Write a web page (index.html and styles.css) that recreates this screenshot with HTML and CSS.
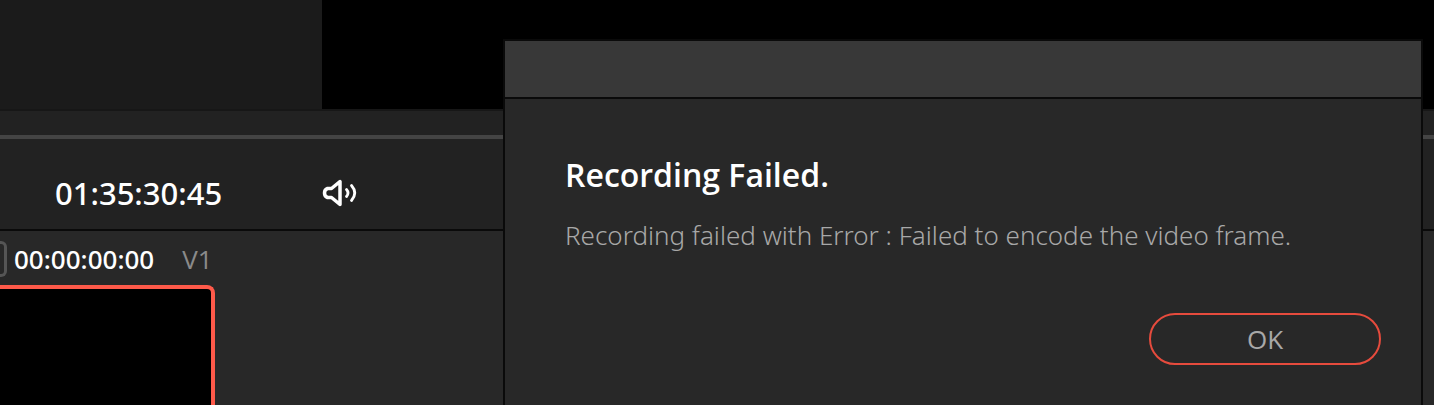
FILE: index.html
```
<!DOCTYPE html>
<html lang="en">
<head>
    <meta charset="UTF-8">
    <meta name="viewport" content="width=device-width, initial-scale=1.0">
    <title>Recording Failed</title>
    <link rel="stylesheet" href="styles.css">
</head>
<body>

<div class="editor">
    <div class="top-area">
        <div class="side-panel"></div>
        <div class="viewer"></div>
    </div>

    <div class="scrub-bar"></div>

    <div class="transport">
        <span class="timecode">01:35:30:45</span>
        <button class="volume-button" aria-label="Volume">
            <svg width="40" height="32" viewBox="0 0 40 32" fill="none" stroke="#fff" stroke-linecap="round" stroke-linejoin="round">
                <path d="M20 4.500V27.500L11.500 20.500H7.500Q4.500 19.500 4.500 16T7.500 11.500H11.500Z" stroke-width="3.500"/>
                <path d="M26.500 12.500Q29.500 16 26.500 19.500" stroke-width="2.800"/>
                <path d="M31.500 8.500Q38 16 31.500 23.500" stroke-width="2.800"/>
            </svg>
        </button>
    </div>

    <div class="clips">
        <div class="clip-header">
            <span class="clip-number"></span>
            <span class="clip-time">00:00:00:00</span>
            <span class="clip-track">V1</span>
        </div>
        <div class="clip-thumb"></div>
    </div>
</div>

<div class="dialog" role="alertdialog" aria-labelledby="dialog-title" aria-describedby="dialog-message">
    <div class="dialog-bar"></div>
    <div class="dialog-body">
        <h2 id="dialog-title">Recording Failed.</h2>
        <p id="dialog-message">Recording failed with Error : Failed to encode the video frame.</p>
        <button class="ok-button">OK</button>
    </div>
</div>

</body>
</html>
```
FILE: styles.css
```
* {
    margin: 0;
    padding: 0;
    box-sizing: border-box;
}

body {
    font-family: 'Open Sans', 'Noto Sans', sans-serif;
    background-color: #282828;
    color: #fff;
    height: 100vh;
    overflow: hidden;
}

.editor {
    display: flex;
    flex-direction: column;
    height: 100vh;
}

.top-area {
    display: flex;
    height: 111px;
    border-bottom: 2px solid #171717;
    background-color: #000;
}

.side-panel {
    width: 322px;
    background-color: #1b1b1b;
}

.viewer {
    flex: 1;
}

.scrub-bar {
    height: 28px;
    background-color: #222;
    border-bottom: 4px solid #444;
}

.transport {
    display: flex;
    align-items: center;
    gap: 98px;
    padding: 32px 55px 14px;
    background-color: #222;
    border-bottom: 2px solid #0a0a0a;
}

.timecode {
    font-family: 'Noto Sans', sans-serif;
    font-size: 31px;
    line-height: 44px;
    font-weight: 500;
}

.volume-button {
    display: flex;
    background: none;
    border: none;
    cursor: pointer;
}

.clips {
    display: flex;
    flex-direction: column;
    flex: 1;
    min-height: 0;
    padding-top: 10px;
}

.clip-header {
    display: flex;
    align-items: center;
    margin-bottom: 8px;
    font-size: 26px;
    line-height: 36px;
}

.clip-number {
    width: 7px;
    height: 36px;
    margin-right: 7px;
    border: 3px solid #555;
    border-left: none;
    border-radius: 0 6px 6px 0;
}

.clip-time {
    font-family: 'Noto Sans', sans-serif;
    font-weight: 500;
    margin-right: 28px;
}

.clip-track {
    color: #8a8a8a;
}

.clip-thumb {
    flex: 1;
    width: 215px;
    background-color: #000;
    border: 4px solid #ff5a4a;
    border-left: none;
    border-bottom: none;
    border-radius: 0 8px 0 0;
}

/* Dialog sits over the editor */
.dialog {
    position: absolute;
    top: 39px;
    left: 503px;
    right: 11px;
    bottom: 0;
    background-color: #282828;
    border: 2px solid #0a0a0a;
    border-bottom: none;
}

.dialog-bar {
    height: 58px;
    background-color: #383838;
    border-bottom: 2px solid #0a0a0a;
}

.dialog-body {
    display: flex;
    flex-direction: column;
    padding: 54px 40px 40px 60px;
}

.dialog-body h2 {
    font-size: 32px;
    line-height: 44px;
    font-weight: 600;
    margin-bottom: 20px;
}

.dialog-body p {
    font-family: 'Noto Sans', sans-serif;
    font-size: 26px;
    line-height: 36px;
    font-weight: 300;
    color: #a8a8a8;
    margin-bottom: 60px;
}

.ok-button {
    align-self: flex-end;
    width: 232px;
    height: 52px;
    font-family: inherit;
    font-size: 26px;
    color: #a8a8a8;
    background: none;
    border: 2px solid #e64b3d;
    border-radius: 26px;
    cursor: pointer;
}
```
